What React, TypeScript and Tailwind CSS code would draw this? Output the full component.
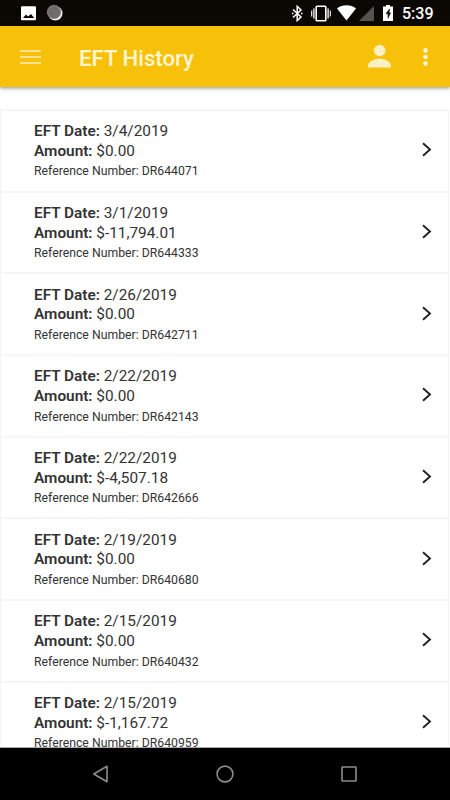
type Eft = {
  date: string;
  amount: string;
  reference: string;
};

const history: Eft[] = [
  { date: '3/4/2019', amount: '$0.00', reference: 'DR644071' },
  { date: '3/1/2019', amount: '$-11,794.01', reference: 'DR644333' },
  { date: '2/26/2019', amount: '$0.00', reference: 'DR642711' },
  { date: '2/22/2019', amount: '$0.00', reference: 'DR642143' },
  { date: '2/22/2019', amount: '$-4,507.18', reference: 'DR642666' },
  { date: '2/19/2019', amount: '$0.00', reference: 'DR640680' },
  { date: '2/15/2019', amount: '$0.00', reference: 'DR640432' },
  { date: '2/15/2019', amount: '$-1,167.72', reference: 'DR640959' },
];

function StatusBar() {
  return (
    <div className="flex h-[26px] shrink-0 items-center bg-[#0b0803] text-white">
      <svg className="ml-[21px] h-[15px] w-[15px]" viewBox="0 0 15 15">
        <rect y=".3" width="15" height="14" rx="1" fill="#fff" />
        <path d="M2 12 5 8.5l2 2L10 8l3.2 4z" fill="#0b0803" />
      </svg>
      <svg className="ml-[11px] h-4 w-4" viewBox="0 0 16 16">
        <circle cx="8.3" cy="8.3" r="7.2" fill="#eee" />
        <circle cx="7" cy="7" r="7" fill="#6c6c6c" />
        <circle cx="7" cy="7" r="6.5" fill="none" stroke="#a5a5a5" strokeWidth="1" strokeDasharray="1 1" />
      </svg>
      <div className="flex-1" />
      <svg className="h-[17px] w-[11px]" viewBox="0 0 11 17" fill="none" stroke="#fff" strokeWidth="1.5">
        <path d="m1 4.5 8 7.5-3.8 3.6V1.3L9 5 1 12.5" />
        <path d="M0 8.5h1.5M9 8.5h1.5" />
      </svg>
      <svg className="ml-2 h-[17px] w-5" viewBox="0 0 20 17" fill="none" stroke="#fff">
        <rect x="5.2" y="1.2" width="9.6" height="14.6" rx=".8" strokeWidth="1.6" />
        <path d="M2.9 3.5v10M17.1 3.5v10" strokeWidth="1.3" />
        <path d="M.7 5.5v6M19.3 5.5v6" strokeWidth="1.1" />
      </svg>
      <svg className="ml-1.5 h-4 w-[19px]" viewBox="0 0 19 16">
        <path d="M0 3.6C5-.8 14-.8 19 3.6L9.5 15.6z" fill="#fff" />
      </svg>
      <svg className="ml-[3px] h-[15px] w-[15px]" viewBox="0 0 15 15">
        <path d="M15 0v15H0z" fill="#55534f" />
      </svg>
      <svg className="ml-[9px] h-4 w-2.5" viewBox="0 0 10 16">
        <path d="M3 0h4v1.6h3V16H0V1.6h3z" fill="#fff" />
        <path d="M6.6 3.8 3 8.8h2v4.4l2.6-5.4H6z" fill="#0b0803" stroke="#0b0803" strokeWidth=".5" />
      </svg>
      <span className="mt-[2px] mr-[17px] ml-[9px] w-[31px] text-base leading-none font-medium whitespace-nowrap">5:39</span>
    </div>
  );
}

function AppBar() {
  return (
    <header className="z-10 flex h-[61px] shrink-0 items-center bg-[#f8c109] shadow-[0_1px_4px_rgba(0,0,0,0.45)]">
      <svg className="ml-5 h-4 w-[21px]" viewBox="0 0 21 16" fill="none" stroke="#fde391" strokeWidth="2">
        <path d="M0 2h21M0 8h21M0 14h21" />
      </svg>
      <h1 className="mt-[3px] ml-[38px] text-[22.2px] leading-none font-medium text-[#fff5d3]">EFT History</h1>
      <div className="flex-1" />
      <svg className="mb-px h-6 w-[23px]" viewBox="0 0 23 24" fill="#fff0c4">
        <circle cx="11.7" cy="6.5" r="5.8" />
        <path d="M0 23.5v-2C1 17 6.5 14.8 11.5 14.8S22 17 23 21.5v2z" />
      </svg>
      <svg className="mr-[22px] ml-8 h-[18px] w-[5px]" viewBox="0 0 5 18" fill="#fff6d8">
        <circle cx="2.5" cy="2.4" r="2.3" />
        <circle cx="2.5" cy="9" r="2.3" />
        <circle cx="2.5" cy="15.6" r="2.3" />
      </svg>
    </header>
  );
}

function EftRow({ date, amount, reference }: Eft) {
  return (
    <li className="flex h-[81.7px] items-center border-t-2 border-[#f6f6f6] pr-[16.5px] pl-[33px] text-[#333]">
      <div className="flex-1">
        <p className="text-[15.35px] leading-[19.6px]">
          <b className="font-semibold">EFT Date:</b> {date}
        </p>
        <p className="text-[15.35px] leading-[19.6px]">
          <b className="font-semibold">Amount:</b> {amount}
        </p>
        <p className="mt-[2px] text-[12.25px] leading-4">Reference Number: {reference}</p>
      </div>
      <svg className="mb-0.5 h-[15px] w-[10px]" viewBox="0 0 10 15" fill="none" stroke="#222" strokeWidth="1.9">
        <path d="m1 1.3 7 6.2-7 6.2" />
      </svg>
    </li>
  );
}

function NavBar() {
  return (
    <nav className="flex h-[52px] shrink-0 items-center bg-black">
      <svg className="ml-[92px] h-[18px] w-4" viewBox="0 0 16 18" fill="none" stroke="#8c8c8c" strokeWidth="1.6">
        <path d="M15 1.3v15.4L1.8 9z" strokeLinejoin="round" />
      </svg>
      <svg className="ml-[108px] h-[18px] w-[18px]" viewBox="0 0 18 18" fill="none" stroke="#8c8c8c" strokeWidth="1.6">
        <circle cx="9" cy="9" r="7.9" />
      </svg>
      <svg className="ml-[107px] h-4 w-4" viewBox="0 0 16 16" fill="none" stroke="#8c8c8c" strokeWidth="1.6">
        <rect x="1" y="1" width="14" height="14" rx=".5" />
      </svg>
    </nav>
  );
}

export default function App() {
  return (
    <div className="flex h-[800px] w-[450px] flex-col overflow-hidden bg-white font-['Roboto',sans-serif]">
      <StatusBar />
      <AppBar />
      <main className="min-h-0 flex-1 overflow-hidden border-b border-[#aaa] pt-[22px]">
        <ul className="mr-px border-x border-[#f4f4f4]">
          {history.map((eft) => (
            <EftRow key={eft.reference} {...eft} />
          ))}
        </ul>
      </main>
      <NavBar />
    </div>
  );
}
